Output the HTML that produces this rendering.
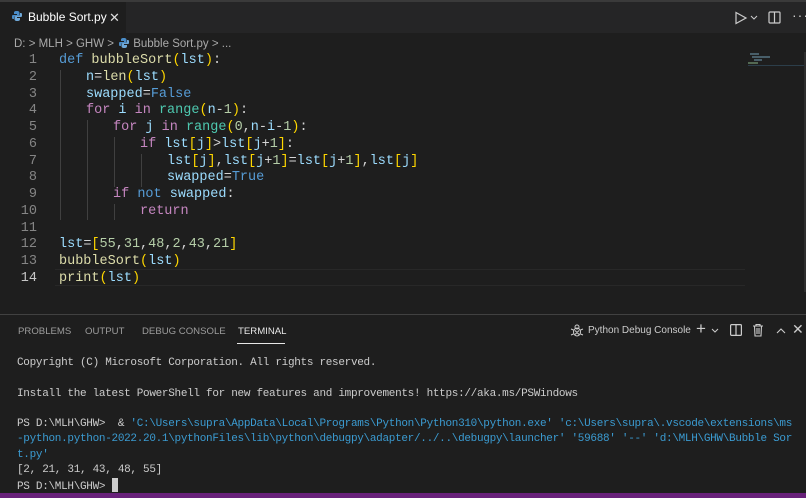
<!DOCTYPE html>
<html><head><meta charset="utf-8"><style>
*{margin:0;padding:0;box-sizing:border-box}
body{width:806px;height:498px;background:#1e1e1e;overflow:hidden;position:relative;font-family:"Liberation Sans",sans-serif;color:#ccc}
.top{position:absolute;left:0;top:0;width:806px;height:33px;background:#252526;border-top:2px solid #3a3a3a}
.tab{position:absolute;left:0;top:0;width:126px;height:31px;background:#1e1e1e;font-size:12px;color:#fff;line-height:31px;padding-left:28px}
.pyi{position:absolute;width:10px;height:10px}
.bc{position:absolute;left:14px;top:36px;font-size:11.5px;color:#aaa;line-height:16px}
.code{position:absolute;left:0;top:53px;font-family:"Liberation Mono",monospace;font-size:13.5px;line-height:16.75px;white-space:pre}
.ln{position:absolute;left:0;width:37px;text-align:right;color:#858585}
.ln.cur{color:#c6c6c6}
.cl{position:absolute;left:59px;color:#9cdcfe}
.k{color:#569cd6}.f{color:#dcdcaa}.p{color:#ffd700}.c{color:#c586c0}.b{color:#4ec9b0}.n{color:#b5cea8}.o{color:#d4d4d4}
.guide{position:absolute;width:1px;background:#404040}
.curline{position:absolute;left:55px;top:269px;width:690px;height:17px;border-top:1px solid #282828;border-bottom:1px solid #282828}
.panel{position:absolute;left:0;top:314px;width:806px;height:179px;border-top:1px solid #414141;background:#1e1e1e}
.ptabs{position:absolute;top:11px;font-size:9.6px;color:#9d9d9d}
.term{position:absolute;left:17px;top:356px;font-family:"Liberation Mono",monospace;font-size:11px;letter-spacing:-0.3px;line-height:15.3px;white-space:pre;color:#ccc}
.s{color:#3b9bd1}
.status{position:absolute;left:0;top:493px;width:806px;height:5px;background:#68217a}
</style></head><body>
<div class="top">
 <div class="tab">
  <svg class="pyi" style="left:12px;top:9px" viewBox="0 0 10 10"><path d="M5 0C2 0 2 1 2 2v1h3v1H1C0 4 0 5 0 6s0 2 1 2h1V6.5C2 5.5 3 5 4 5h2c1 0 1.5-.5 1.5-1.5V2C7.5 1 7 0 5 0z" fill="#4a8cc7"/><path d="M5 10c3 0 3-1 3-2V7H5V6h4c1 0 1-1 1-2s0-2-1-2H8v1.5C8 4.5 7 5 6 5H4c-1 0-1.5.5-1.5 1.5V8C2.5 9 3 10 5 10z" fill="#6fa8d8"/></svg>
  Bubble Sort.py<span style="position:absolute;left:109px;top:0;font-size:13px;color:#ddd">✕</span>
 </div>
 <svg style="position:absolute;left:734px;top:9px" width="14" height="14" viewBox="0 0 14 14"><path d="M2 1.5 L12 7 L2 12.5Z" fill="none" stroke="#ccc" stroke-width="1.2"/></svg>
 <svg style="position:absolute;left:750px;top:13px" width="8" height="6" viewBox="0 0 8 6"><path d="M1 1 L4 4 L7 1" fill="none" stroke="#ccc" stroke-width="1"/></svg>
 <svg style="position:absolute;left:768px;top:9px" width="13" height="13" viewBox="0 0 13 13"><rect x="1" y="1" width="11" height="11" rx="1" fill="none" stroke="#ccc" stroke-width="1.2"/><path d="M6.5 1V12" stroke="#ccc" stroke-width="1.2"/></svg>
 <div style="position:absolute;left:792px;top:5px;color:#ccc;font-size:14px;letter-spacing:1px">···</div>
</div>
<div class="bc">D: &gt; MLH &gt; GHW &gt; <svg class="pyi" style="position:relative;top:1px;left:2px;margin-right:6px" viewBox="0 0 10 10"><path d="M5 0C2 0 2 1 2 2v1h3v1H1C0 4 0 5 0 6s0 2 1 2h1V6.5C2 5.5 3 5 4 5h2c1 0 1.5-.5 1.5-1.5V2C7.5 1 7 0 5 0z" fill="#4a8cc7"/><path d="M5 10c3 0 3-1 3-2V7H5V6h4c1 0 1-1 1-2s0-2-1-2H8v1.5C8 4.5 7 5 6 5H4c-1 0-1.5.5-1.5 1.5V8C2.5 9 3 10 5 10z" fill="#6fa8d8"/></svg>Bubble Sort.py &gt; ...</div>
<div class="curline"></div>
<div class="guide" style="left:60px;top:70px;height:150px"></div>
<div class="guide" style="left:87px;top:120px;height:100px"></div>
<div class="guide" style="left:114px;top:137px;height:50px"></div>
<div class="guide" style="left:141px;top:154px;height:33px"></div>
<div class="guide" style="left:114px;top:204px;height:16px"></div>
<div style="position:absolute;left:748px;top:52px;width:25px;height:14px;opacity:.7">
 <div style="position:absolute;left:2px;top:1px;width:9px;height:2px;background:#5a7a8a"></div>
 <div style="position:absolute;left:4px;top:4px;width:18px;height:2px;background:#5a7a8a"></div>
 <div style="position:absolute;left:6px;top:7px;width:8px;height:2px;background:#5a7a8a"></div>
 <div style="position:absolute;left:0px;top:10px;width:10px;height:2px;background:#6a8a6a"></div>
</div>
<div style="position:absolute;left:748px;top:65px;width:58px;height:1px;background:#2c3e4a"></div>
<div style="position:absolute;left:804px;top:52px;width:2px;height:240px;background:#2e2e2e"></div>
<div class="code">
<div class="ln" style="top:0">1</div><div class="cl" style="top:0"><span class="k">def</span> <span class="f">bubbleSort</span><span class="p">(</span>lst<span class="p">)</span><span class="o">:</span></div>
<div class="ln" style="top:16.75px">2</div><div class="cl" style="top:16.75px;left:86px">n<span class="o">=</span><span class="f">len</span><span class="p">(</span>lst<span class="p">)</span></div>
<div class="ln" style="top:33.5px">3</div><div class="cl" style="top:33.5px;left:86px">swapped<span class="o">=</span><span class="k">False</span></div>
<div class="ln" style="top:50.25px">4</div><div class="cl" style="top:50.25px;left:86px"><span class="c">for</span> i <span class="c">in</span> <span class="b">range</span><span class="p">(</span>n<span class="o">-</span><span class="n">1</span><span class="p">)</span><span class="o">:</span></div>
<div class="ln" style="top:67px">5</div><div class="cl" style="top:67px;left:113px"><span class="c">for</span> j <span class="c">in</span> <span class="b">range</span><span class="p">(</span><span class="n">0</span><span class="o">,</span>n<span class="o">-</span>i<span class="o">-</span><span class="n">1</span><span class="p">)</span><span class="o">:</span></div>
<div class="ln" style="top:83.75px">6</div><div class="cl" style="top:83.75px;left:140px"><span class="c">if</span> lst<span class="p">[</span>j<span class="p">]</span><span class="o">&gt;</span>lst<span class="p">[</span>j<span class="o">+</span><span class="n">1</span><span class="p">]</span><span class="o">:</span></div>
<div class="ln" style="top:100.5px">7</div><div class="cl" style="top:100.5px;left:167px">lst<span class="p">[</span>j<span class="p">]</span><span class="o">,</span>lst<span class="p">[</span>j<span class="o">+</span><span class="n">1</span><span class="p">]</span><span class="o">=</span>lst<span class="p">[</span>j<span class="o">+</span><span class="n">1</span><span class="p">]</span><span class="o">,</span>lst<span class="p">[</span>j<span class="p">]</span></div>
<div class="ln" style="top:117.25px">8</div><div class="cl" style="top:117.25px;left:167px">swapped<span class="o">=</span><span class="k">True</span></div>
<div class="ln" style="top:134px">9</div><div class="cl" style="top:134px;left:113px"><span class="c">if</span> <span class="k">not</span> swapped<span class="o">:</span></div>
<div class="ln" style="top:150.75px">10</div><div class="cl" style="top:150.75px;left:140px"><span class="c">return</span></div>
<div class="ln" style="top:167.5px">11</div>
<div class="ln" style="top:184.25px">12</div><div class="cl" style="top:184.25px">lst<span class="o">=</span><span class="p">[</span><span class="n">55</span><span class="o">,</span><span class="n">31</span><span class="o">,</span><span class="n">48</span><span class="o">,</span><span class="n">2</span><span class="o">,</span><span class="n">43</span><span class="o">,</span><span class="n">21</span><span class="p">]</span></div>
<div class="ln" style="top:201px">13</div><div class="cl" style="top:201px"><span class="f">bubbleSort</span><span class="p">(</span>lst<span class="p">)</span></div>
<div class="ln cur" style="top:217.75px">14</div><div class="cl" style="top:217.75px"><span class="f">print</span><span class="p">(</span>lst<span class="p">)</span></div>
</div>
<div class="panel">
 <div class="ptabs" style="left:18px">PROBLEMS</div>
 <div class="ptabs" style="left:85px">OUTPUT</div>
 <div class="ptabs" style="left:142px">DEBUG CONSOLE</div>
 <div class="ptabs" style="left:238px;color:#e7e7e7">TERMINAL</div>
 <div style="position:absolute;left:237px;top:28px;width:48px;height:1px;background:#e7e7e7"></div>
 <svg style="position:absolute;left:570px;top:8px" width="14" height="14" viewBox="0 0 14 14" fill="none" stroke="#ccc" stroke-width="1"><circle cx="7" cy="4" r="2"/><ellipse cx="7" cy="9" rx="3.5" ry="4"/><path d="M5 7.5 L9 11.5 M9 7.5 L5 11.5 M1 6 L3.5 7 M13 6 L10.5 7 M1 12 L3.5 11 M13 12 L10.5 11"/></svg>
 <div style="position:absolute;left:588px;top:10px;font-size:10px;color:#ccc">Python Debug Console</div>
 <div style="position:absolute;left:696px;top:4px;font-size:17px;color:#ccc;font-weight:300">+</div>
 <svg style="position:absolute;left:711px;top:13px" width="8" height="6" viewBox="0 0 8 6"><path d="M1 1 L4 4 L7 1" fill="none" stroke="#ccc" stroke-width="1"/></svg>
 <svg style="position:absolute;left:730px;top:9px" width="12" height="12" viewBox="0 0 12 12"><rect x="0.6" y="0.6" width="10.8" height="10.8" rx="1" fill="none" stroke="#ccc" stroke-width="1.2"/><path d="M6 0.6V11.4" stroke="#ccc" stroke-width="1.2"/></svg>
 <svg style="position:absolute;left:752px;top:8px" width="12" height="14" viewBox="0 0 12 14" fill="none" stroke="#ccc" stroke-width="1.1"><path d="M1 3H11M4 3V1.5H8V3M2.5 3L3 13H9L9.5 3M5 5V11M7 5V11"/></svg>
 <svg style="position:absolute;left:776px;top:12px" width="10" height="7" viewBox="0 0 10 7"><path d="M1 6 L5 2 L9 6" fill="none" stroke="#ccc" stroke-width="1.1"/></svg>
 <div style="position:absolute;left:792px;top:6px;font-size:14px;color:#ccc">✕</div>
</div>
<div class="term">Copyright (C) Microsoft Corporation. All rights reserved.

Install the latest PowerShell for new features and improvements! https://aka.ms/PSWindows

PS D:\MLH\GHW&gt;  &amp; <span class="s">'C:\Users\supra\AppData\Local\Programs\Python\Python310\python.exe' 'c:\Users\supra\.vscode\extensions\ms</span>
<span class="s">-python.python-2022.20.1\pythonFiles\lib\python\debugpy\adapter/../..\debugpy\launcher' '59688' '--' 'd:\MLH\GHW\Bubble Sor</span>
<span class="s">t.py'</span>
[2, 21, 31, 43, 48, 55]
PS D:\MLH\GHW&gt; <span style="display:inline-block;width:6px;height:14px;background:#ccc;vertical-align:-3px"></span></div>
<div class="status"></div>
</body></html>
